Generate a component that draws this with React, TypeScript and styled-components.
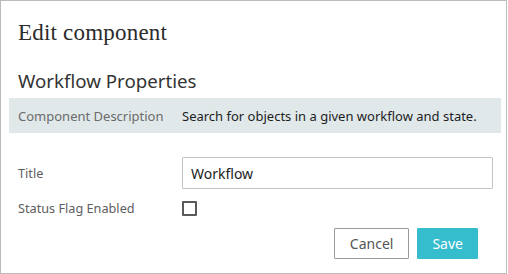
import React, { useState } from "react";
import styled, { createGlobalStyle } from "styled-components";

const GlobalStyle = createGlobalStyle`
  body {
    margin: 0;
    background: #ffffff;
    font-family: "Noto Sans", "Open Sans", sans-serif;
  }
`;

export default function App() {
  const [title, setTitle] = useState("Workflow");
  const [enabled, setEnabled] = useState(false);

  return (
    <>
      <GlobalStyle />
      <Dialog>
        <DialogTitle>Edit component</DialogTitle>
        <SectionTitle>Workflow Properties</SectionTitle>

        <DescriptionBand>
          <DescLabel>Component Description</DescLabel>
          <DescText>Search for objects in a given workflow and state.</DescText>
        </DescriptionBand>

        <FormGrid>
          <FieldLabel htmlFor="title">Title</FieldLabel>
          <TextInput
            id="title"
            type="text"
            value={title}
            onChange={(e) => setTitle(e.target.value)}
          />
          <FieldLabel htmlFor="flag">Status Flag Enabled</FieldLabel>
          <CheckboxCell>
            <Checkbox
              id="flag"
              type="checkbox"
              checked={enabled}
              onChange={(e) => setEnabled(e.target.checked)}
            />
          </CheckboxCell>
        </FormGrid>

        <Footer>
          <Button type="button">Cancel</Button>
          <Button type="button" $primary>
            Save
          </Button>
        </Footer>
      </Dialog>
    </>
  );
}

// Styled Components
const Dialog = styled.div`
  width: 507px;
  height: 274px;
  box-sizing: border-box;
  border: 1px solid #bcbcbc;
  padding: 0 5px 0 8px;
  display: flex;
  flex-direction: column;
`;

const DialogTitle = styled.h1`
  margin: 19px 0 0 9px;
  font-family: "Liberation Serif", "DejaVu Serif", serif;
  font-weight: 400;
  font-size: 23px;
  line-height: 26px;
  letter-spacing: 0.2px;
  color: #2b2b2b;
`;

const SectionTitle = styled.h2`
  margin: 22px 0 0 9px;
  font-weight: 400;
  font-size: 18.7px;
  line-height: 26px;
  color: #333333;
`;

const DescriptionBand = styled.div`
  margin-top: 4px;
  height: 35px;
  background: #e0e8ea;
  display: grid;
  grid-template-columns: 164px 1fr;
  align-items: center;
  padding-left: 9px;
  font-size: 13px;
`;

const DescLabel = styled.span`
  color: #6b6b6b;
`;

const DescText = styled.span`
  color: #1e1e1e;
`;

const FormGrid = styled.div`
  margin-top: 24px;
  padding-left: 9px;
  display: grid;
  grid-template-columns: 164px 311px;
  grid-template-rows: 32px 16px;
  row-gap: 11px;
  align-items: center;
`;

const FieldLabel = styled.label`
  font-size: 12.7px;
  color: #5e5e5e;
`;

const TextInput = styled.input`
  box-sizing: border-box;
  width: 100%;
  height: 32px;
  padding: 0 8px;
  border: 1px solid #c4c4c4;
  border-radius: 1px;
  font-family: inherit;
  font-size: 14px;
  color: #222222;
  outline: none;
`;

const CheckboxCell = styled.div`
  display: flex;
  align-items: center;
`;

const Checkbox = styled.input`
  appearance: none;
  margin: 0;
  width: 15px;
  height: 15px;
  box-sizing: border-box;
  border: 2px solid #5a5a5a;
  border-radius: 1px;
  background: #ffffff;
`;

const Footer = styled.div`
  margin-top: 12px;
  padding-right: 23px;
  display: flex;
  justify-content: flex-end;
  gap: 8px;
`;

const Button = styled.button<{ $primary?: boolean }>`
  height: 31px;
  box-sizing: border-box;
  padding: 0 ${(p) => (p.$primary ? "14px" : "15px")};
  font-family: inherit;
  font-size: 14px;
  border-radius: 1px;
  border: 1px solid ${(p) => (p.$primary ? "#35bccd" : "#9a9a9a")};
  background: ${(p) => (p.$primary ? "#35bccd" : "#ffffff")};
  color: ${(p) => (p.$primary ? "#ffffff" : "#555555")};
  cursor: pointer;
`;
